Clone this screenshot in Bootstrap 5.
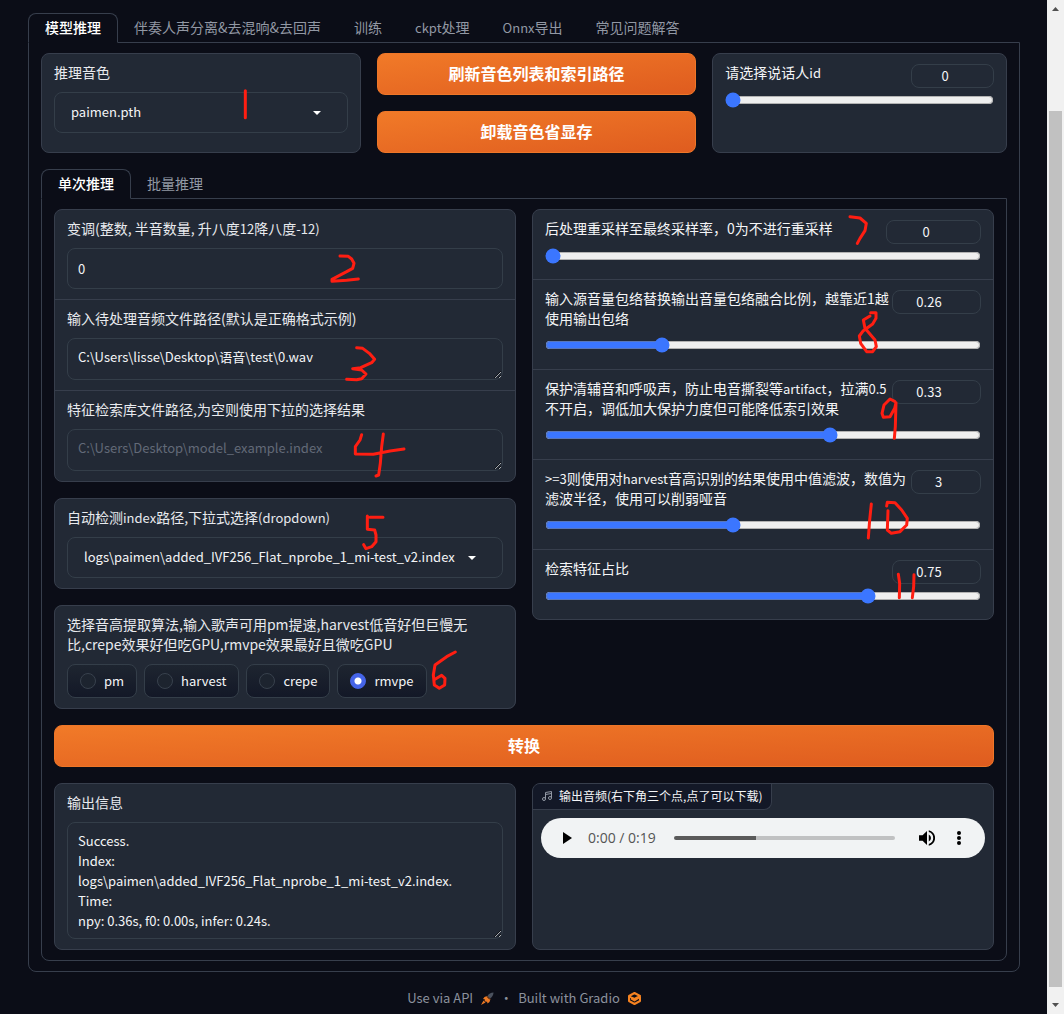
<!DOCTYPE html>
<html lang="zh-CN" data-bs-theme="dark">
<head>
<meta charset="utf-8">
<meta name="viewport" content="width=device-width, initial-scale=1">
<title>RVC WebUI</title>
<link href="https://cdn.jsdelivr.net/npm/bootstrap@5.3.0/dist/css/bootstrap.min.css" rel="stylesheet">
<style>
:root { --page:#0b0d17; --panel:#222935; --line:#373e4c; --field-line:#343e49; --ink:#f4f5f7; --blue:#3b76ff; }
body { background:var(--page); color:var(--ink); font:14px/20px "Noto Sans CJK SC", sans-serif; }
.app-main { padding:13px 27px 5px 28px; min-width:0; }
.latin { font-size:13px; line-height:1; }

/* tabs */
.app-tabs { border-bottom:0; }
.app-tabs .nav-link { height:30px; padding:3px 16px 5px; margin-bottom:-1px; border:1px solid transparent; border-radius:8px 8px 0 0; color:#9298a4; line-height:20px; position:relative; background:none; }
.app-tabs .nav-link:not(.active) { padding-left:15px; }
.app-tabs .nav-link.active { color:#fff; font-weight:500; background:var(--page); border-color:var(--line) var(--line) var(--page); z-index:1; }
.app-panel { border:1px solid var(--line); border-radius:0 0 8px 8px; padding:10px 12px; }

/* blocks */
.block-card { background:var(--panel); border:1px solid var(--line); border-radius:8px; overflow:hidden; }
.block-cell { padding:8px 12px 10px; }
.block-cell + .block-cell { border-top:1px solid var(--line); }
.block-label { display:block; margin-bottom:10px; color:#e8eaee; }
.col-wide { flex:1 1 320px; min-width:0; }
.col-slim { flex:1 1 295px; min-width:0; }

/* fields */
.field-box { background:transparent; border:1px solid var(--field-line); border-radius:8px; color:var(--ink); font-size:13px; line-height:20px; }
.field-box:focus { background:transparent; box-shadow:none; }
input.field-box, .pick-box { height:41px; }
input.field-box, textarea.field-box { padding:8px 10px; }
textarea.field-box { height:42px; min-height:42px; resize:both; overflow:hidden; }
textarea.field-box.tall-area { height:117px; }
.field-box::placeholder { color:#626a78; opacity:1; }
.pick-box select { background:transparent; border:0; color:var(--ink); appearance:none; padding:0 0 2px 16px; outline:0; min-width:0; }
.pick-box svg { margin-right:26px; }
.pick-box select option { background:var(--panel); }

/* sliders */
.slide-cell { padding:8px 12px 16px; }
.slide-cell + .slide-cell { border-top:1px solid var(--line); }
.slide-head { padding-bottom:9px; }
.slide-head .num-box { height:24px; padding:0 8px 1px; margin-top:2px; text-align:center; flex:none; }
.slide-head label { min-width:0; }
.num-l { width:95px; } .num-m { width:89px; } .num-s { width:70px; } .num-r { width:83px; }
.one-line { padding-bottom:15px; }
.one-line .slide-head { height:30px; padding-bottom:0; }
.slide-bar { display:block; width:100%; height:16px; margin:0; accent-color:var(--blue); color-scheme:light; }

/* radios */
.radio-chip { height:34px; padding:0 12px 1px; border:1px solid var(--field-line); border-radius:8px; background:linear-gradient(to bottom,#1e2530,#131827); gap:8px; font-size:13px; cursor:pointer; }
.radio-chip input { appearance:none; width:16px; height:16px; margin:0; border:1px solid #38414d; border-radius:50%; background:#1d242f; }
.radio-chip input:checked { border-color:#4564e8; background:radial-gradient(circle,#fff 3px,#4564e8 4px); }
.radio-row { gap:7px; }

/* buttons */
.btn-flame { height:42px; border:1px solid #ee7628; border-radius:8px; background:linear-gradient(to bottom right,#f17a28,#df5c1f); color:#fff; font-size:16px; line-height:24px; font-weight:700; padding:4px 12px 6px; }
.btn-flame:hover { color:#fff; border-color:#f98a3c; background:#f47c29; }

/* audio */
.audio-tag { height:26px; padding:2px 9px 3px 8px; gap:6px; background:#131827; border:1px solid var(--line); border-width:0 1px 1px 0; border-radius:0 0 8px 0; font-size:12px; }
.audio-bar { height:40px; margin:8px; padding:0 20px; background:#f1f3f4; border-radius:20px; }
.audio-bar button { border:0; background:none; padding:0; line-height:0; }
.audio-vol { margin-right:18px; }
.audio-time { font-family:"Open Sans", sans-serif; font-size:14px; color:#555; margin:0 18px 0 15px; white-space:nowrap; }
.audio-seek { appearance:none; flex:1 1 0; min-width:0; height:4px; margin:0 24px 0 0; border-radius:2px; background:linear-gradient(to right,#5a5a5a var(--played),#c0c1c2 var(--played)); }
.audio-seek::-webkit-slider-thumb { appearance:none; width:0; height:0; }

.app-footer { margin-top:16px; color:#8b919d; font-size:13px; }
.app-footer a { color:inherit; text-decoration:none; }
.foot-dot { width:24px; text-align:center; }

/* window scroll strip */
.scroll-strip { width:17px; background:#f1f1f1; flex:none; padding:0 2px; }
.scroll-strip svg { flex:none; }
.scroll-grip { background:#c1c1c1; flex:876 1 0; width:100%; }
.scroll-gap { flex:94 1 0; } .scroll-gap-end { flex:10 1 0; }

.pen-layer { position:absolute; left:0; top:0; pointer-events:none; z-index:5; fill:none; stroke:#ff1e12; stroke-width:9; stroke-linecap:round; stroke-linejoin:round; }
</style>
<script src="https://cdn.jsdelivr.net/npm/bootstrap@5.3.0/dist/js/bootstrap.bundle.min.js"></script>
</head>
<body>
<div class="d-flex min-vh-100 position-relative">
  <main class="app-main flex-grow-1">
    <nav class="nav nav-tabs app-tabs" aria-label="功能">
      <button class="nav-link active" type="button">模型推理</button>
      <button class="nav-link" type="button">伴奏人声分离&amp;去混响&amp;去回声</button>
      <button class="nav-link" type="button">训练</button>
      <button class="nav-link" type="button"><span class="latin">ckpt</span>处理</button>
      <button class="nav-link" type="button"><span class="latin">Onnx</span>导出</button>
      <button class="nav-link" type="button">常见问题解答</button>
    </nav>
    <section class="app-panel">
      <div class="d-flex gap-3 mb-3">
        <div class="block-card block-cell col-wide">
          <label class="block-label" for="voice">推理音色</label>
          <div class="field-box pick-box d-flex align-items-center">
            <select id="voice" class="flex-grow-1"><option>paimen.pth</option></select>
            <svg width="8" height="4" viewBox="0 0 8 4" aria-hidden="true"><path d="M0 0h8L4 4z" fill="#fff"/></svg>
          </div>
        </div>
        <div class="col-wide d-flex flex-column gap-3">
          <button class="btn btn-flame" type="button">刷新音色列表和索引路径</button>
          <button class="btn btn-flame" type="button">卸载音色省显存</button>
        </div>
        <div class="block-card col-slim">
          <div class="slide-cell one-line">
            <div class="slide-head d-flex">
              <label class="flex-grow-1" for="spk">请选择说话人<span class="latin">id</span></label>
              <input class="field-box num-box num-r" type="number" value="0" aria-label="说话人id">
            </div>
            <input class="slide-bar" id="spk" type="range" min="0" max="100" value="0">
          </div>
        </div>
      </div>

      <nav class="nav nav-tabs app-tabs" aria-label="推理方式">
        <button class="nav-link active" type="button">单次推理</button>
        <button class="nav-link" type="button">批量推理</button>
      </nav>
      <section class="app-panel">
        <div class="row gx-3 mb-3">
          <div class="col-6 d-flex flex-column gap-3">
            <div class="block-card">
              <div class="block-cell">
                <label class="block-label" for="pitch">变调(整数, 半音数量, 升八度<span class="latin">12</span>降八度<span class="latin">-12)</span></label>
                <input class="form-control field-box" id="pitch" type="text" value="0">
              </div>
              <div class="block-cell">
                <label class="block-label" for="wav">输入待处理音频文件路径(默认是正确格式示例)</label>
                <textarea class="form-control field-box" id="wav" rows="1">C:\Users\lisse\Desktop\语音\test\0.wav</textarea>
              </div>
              <div class="block-cell">
                <label class="block-label" for="idx">特征检索库文件路径,为空则使用下拉的选择结果</label>
                <textarea class="form-control field-box" id="idx" rows="1" placeholder="C:\Users\Desktop\model_example.index"></textarea>
              </div>
            </div>
            <div class="block-card block-cell">
              <label class="block-label" for="auto">自动检测<span class="latin">index</span>路径,下拉式选择<span class="latin">(dropdown)</span></label>
              <div class="field-box pick-box d-flex align-items-center">
                <select id="auto" class="flex-grow-1"><option>logs\paimen\added_IVF256_Flat_nprobe_1_mi-test_v2.index</option></select>
                <svg width="8" height="4" viewBox="0 0 8 4" aria-hidden="true"><path d="M0 0h8L4 4z" fill="#fff"/></svg>
              </div>
            </div>
            <fieldset class="block-card block-cell">
              <div class="block-label">选择音高提取算法,输入歌声可用pm提速,harvest低音好但巨慢无比,crepe效果好但吃GPU,rmvpe效果最好且微吃GPU</div>
              <div class="d-flex flex-wrap radio-row">
                <label class="radio-chip d-flex align-items-center"><input type="radio" name="algo">pm</label>
                <label class="radio-chip d-flex align-items-center"><input type="radio" name="algo">harvest</label>
                <label class="radio-chip d-flex align-items-center"><input type="radio" name="algo">crepe</label>
                <label class="radio-chip d-flex align-items-center"><input type="radio" name="algo" checked>rmvpe</label>
              </div>
            </fieldset>
          </div>
          <div class="col-6">
            <div class="block-card">
              <div class="slide-cell one-line">
                <div class="slide-head d-flex">
                  <label class="flex-grow-1" for="s1">后处理重采样至最终采样率，0为不进行重采样</label>
                  <input class="field-box num-box num-l" type="number" value="0" aria-label="重采样率">
                </div>
                <input class="slide-bar" id="s1" type="range" min="0" max="48000" value="0">
              </div>
              <div class="slide-cell">
                <div class="slide-head d-flex align-items-start">
                  <label class="flex-grow-1" for="s2">输入源音量包络替换输出音量包络融合比例，越靠近1越使用输出包络</label>
                  <input class="field-box num-box num-m" type="number" step="0.01" value="0.26" aria-label="融合比例">
                </div>
                <input class="slide-bar" id="s2" type="range" min="0" max="1" step="0.01" value="0.26">
              </div>
              <div class="slide-cell">
                <div class="slide-head d-flex align-items-start">
                  <label class="flex-grow-1" for="s3">保护清辅音和呼吸声，防止电音撕裂等<span class="latin">artifact</span>，拉满<span class="latin">0.5</span><br>不开启，调低加大保护力度但可能降低索引效果</label>
                  <input class="field-box num-box num-m" type="number" step="0.01" value="0.33" aria-label="保护力度">
                </div>
                <input class="slide-bar" id="s3" type="range" min="0" max="0.5" step="0.01" value="0.33">
              </div>
              <div class="slide-cell">
                <div class="slide-head d-flex align-items-start">
                  <label class="flex-grow-1 text-nowrap" for="s4"><span class="latin">&gt;=3</span>则使用对<span class="latin">harvest</span>音高识别的结果使用中值滤波，数值为<br>滤波半径，使用可以削弱哑音</label>
                  <input class="field-box num-box num-s" type="number" value="3" aria-label="滤波半径">
                </div>
                <input class="slide-bar" id="s4" type="range" min="0" max="7" value="3">
              </div>
              <div class="slide-cell one-line">
                <div class="slide-head d-flex">
                  <label class="flex-grow-1" for="s5">检索特征占比</label>
                  <input class="field-box num-box num-m" type="number" step="0.01" value="0.75" aria-label="占比">
                </div>
                <input class="slide-bar" id="s5" type="range" min="0" max="1" step="0.01" value="0.75">
              </div>
            </div>
          </div>
        </div>

        <button class="btn btn-flame w-100 mb-3" type="button">转换</button>

        <div class="row gx-3">
          <div class="col-6">
            <div class="block-card block-cell">
              <label class="block-label" for="out">输出信息</label>
              <textarea class="form-control field-box tall-area" id="out" rows="5">Success.
Index:
logs\paimen\added_IVF256_Flat_nprobe_1_mi-test_v2.index.
Time:
npy: 0.36s, f0: 0.00s, infer: 0.24s.</textarea>
            </div>
          </div>
          <div class="col-6">
            <div class="block-card h-100">
              <div class="audio-tag d-inline-flex align-items-center">
                <svg width="12" height="12" viewBox="0 0 24 24" fill="none" stroke="#9298a4" stroke-width="2" aria-hidden="true"><path d="M9 18V5l12-2v13M9 9l12-2"/><circle cx="6" cy="18" r="3"/><circle cx="18" cy="16" r="3"/></svg>
                <span>输出音频(右下角三个点,点了可以下载)</span>
              </div>
              <div class="audio-bar d-flex align-items-center">
                <button type="button" aria-label="播放"><svg width="12" height="12" viewBox="0 0 12 12"><path d="M2 0v12l9-6z" fill="#000"/></svg></button>
                <span class="audio-time">0:00 / 0:19</span>
                <input class="audio-seek" type="range" min="0" max="19" value="0" aria-label="进度" style="--played:37%">
                <button class="audio-vol" type="button" aria-label="音量"><svg width="16" height="16" viewBox="3 3 18 18"><path d="M3 9v6h4l5 5V4L7 9zm13.5 3A4.5 4.5 0 0 0 14 8v8a4.5 4.5 0 0 0 2.500-4zM14 3.200v2.100a7 7 0 0 1 0 13.400v2.100a9 9 0 0 0 0-17.600z" fill="#000"/></svg></button>
                <button type="button" aria-label="更多"><svg width="12" height="16" viewBox="0 0 12 16"><circle cx="6" cy="3" r="2"/><circle cx="6" cy="8" r="2"/><circle cx="6" cy="13" r="2"/></svg></button>
              </div>
            </div>
          </div>
        </div>
      </section>
    </section>

    <footer class="app-footer d-flex justify-content-center align-items-center">
      <a class="d-flex align-items-center gap-2" href="#api">Use via API
        <svg width="13" height="13" viewBox="0 0 26 26" aria-hidden="true"><path d="M25 1c-5 0-10 3-12 7l5 5c4-2 7-7 7-12z" fill="#4a515e"/><path d="M12 8l-5 2-3 4 4 1-1 2 3 3 2-1 1 4 4-3 2-6z" fill="#ee7a24"/><path d="M5 17l-5 9 9-5z" fill="#ee7a24"/><path d="M12 9l6 6" stroke="#0b0d17" stroke-width="2"/></svg>
      </a>
      <span class="foot-dot">·</span>
      <a class="d-flex align-items-center gap-2" href="#gradio">Built with Gradio
        <svg width="13" height="13" viewBox="0 0 26 26" fill="none" stroke="#f58220" stroke-width="4" stroke-linejoin="round" aria-hidden="true"><path d="M8 12L2 8l11-6 11 6-11 6-5-3M2 8v10l11 6 11-6V10l-11 7-7-4"/></svg>
      </a>
    </footer>
  </main>

  <div class="scroll-strip d-flex flex-column align-items-center" aria-hidden="true">
    <svg width="13" height="17" viewBox="0 0 13 17"><path d="M3 11h7L6.500 7z" fill="#505050"/></svg>
    <span class="scroll-gap"></span>
    <span class="scroll-grip"></span>
    <span class="scroll-gap-end"></span>
    <svg width="13" height="17" viewBox="0 0 13 17"><path d="M3 6h7L6.500 10z" fill="#505050"/></svg>
  </div>

  <!-- red pen marks over the controls -->
  <svg class="pen-layer" width="1047" height="1014" viewBox="0 0 3141 3042" aria-hidden="true">
    <path d="M736 272V353"/>
    <g transform="translate(960 600)">
      <path d="M60 168L85 169L95 177L102 190L98 205L80 215L36 238V244L80 241L115 237"/>
      <path d="M110 443L128 445L148 460L164 478L155 488L122 503L98 506L125 510L138 522L125 536L110 539L80 538"/>
      <path d="M125 704L120 720L106 740V762L160 763L210 753L252 747M190 702L185 740L181 790L176 825L168 828"/>
    </g>
    <g transform="translate(90 1440)">
      <path d="M1059 112H1020M1012 108V148L1034 150L1038 165V185L1025 200L1008 206L1001 194"/>
      <path d="M1276 516L1250 530L1215 555L1210 585L1213 615L1228 625L1244 615L1245 595L1235 586L1215 598"/>
    </g>
    <g transform="translate(2400 600)">
      <path d="M150 50L180 54L199 70L195 92L180 115L172 130"/>
      <path d="M212 338H228V355L218 372L190 392L178 408L182 430L200 455H218L229 440L225 420L195 385L190 360L210 348"/>
      <path d="M284 604L270 597L252 615L246 640L250 652L270 650L284 625L288 608L286 680L283 715"/>
      <path d="M214 912L209 960L205 1014M260 918L262 907L285 908L305 930L322 955L320 975L300 995L274 1000L262 990L264 932"/>
      <path d="M295 1123L299 1150L298 1193M342 1124L341 1160L337 1193"/>
    </g>
  </svg>
</div>
</body>
</html>
